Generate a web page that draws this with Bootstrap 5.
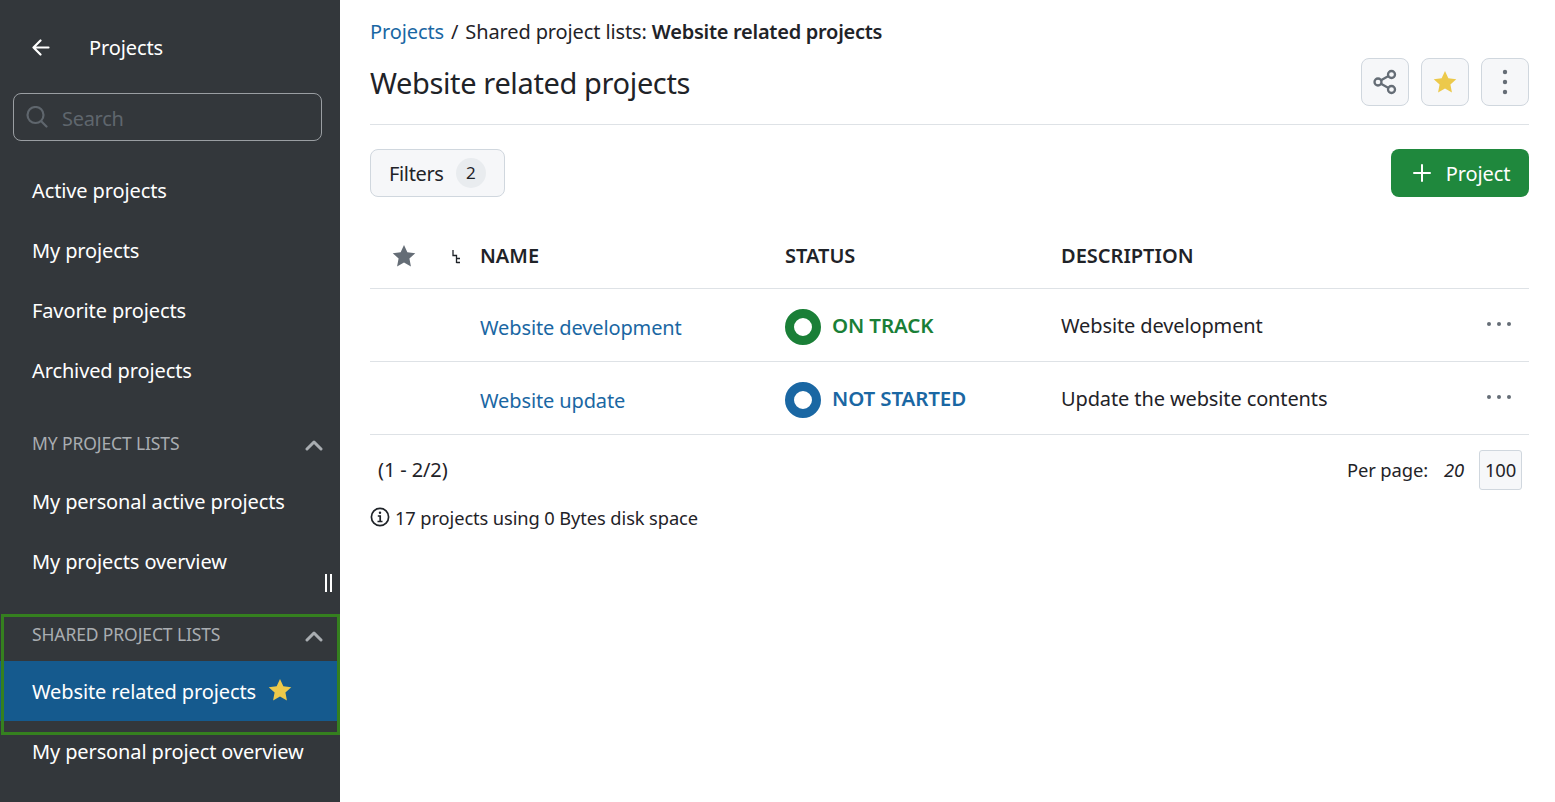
<!doctype html>
<html lang="en">
<head>
<meta charset="utf-8">
<title>Website related projects</title>
<link href="https://cdn.jsdelivr.net/npm/bootstrap@5.3.0/dist/css/bootstrap.min.css" rel="stylesheet">
<style>
html,body{height:100%;overflow:hidden}
body{font-family:"Noto Sans","Open Sans",sans-serif;font-size:20px;color:#1f2328;letter-spacing:-.12px;background:#fff}
a{text-decoration:none;color:#1a67a3}
a:hover{color:#1a67a3}
.shell{height:802px}
.side{width:340px;background:#33373b;color:#fff;flex:none;position:relative}
.side-head{height:93px;padding:30px 0 0 32px;font-size:20px}
.side-head span{margin-left:39px;line-height:36px}
.side-search{margin:0 18px 0 13px;height:48px;border:1px solid #9a9ea2;border-radius:8px;padding:0 12px;color:#5f666d;font-size:20px;letter-spacing:-.3px}
.side-search span{padding-top:3px;margin-left:6px}
.side-list{padding-top:20px}
a.side-item{height:60px;padding-left:32px;color:#fff;display:flex;align-items:center}
.side-sec{padding:0 17px 0 32px;color:#a9adb1;font-size:17.5px;display:flex;align-items:center;justify-content:space-between}
.side-sec svg{margin-top:3px}
.sec1{height:71px;padding-top:14px}
.sec2{height:47px;padding-bottom:7px}
.group-wrap{position:relative;margin:22px 0 1px}
.group-box{position:absolute;left:1px;right:0;top:0;height:121px;border:3px solid #35801f;pointer-events:none}
a.side-item.on{background:#155a8e;padding-top:2px}
.side-item.on svg{margin:0 0 5px 11px}
.handle{position:absolute;left:325px;top:574px;width:7px;height:18px;border-left:2px solid #fff;border-right:2px solid #fff}
.main{flex:1;padding:0 26px 0 30px;min-width:0}
.crumb{height:64px;padding-top:13px;line-height:38px;letter-spacing:-.12px}
.crumb b{font-weight:600;letter-spacing:-.27px}
.crumb-sep{padding:0 7px}
.title-row{height:61px;border-bottom:1px solid #dee2e6;padding-bottom:12px}
.title-row h1{font-size:29px;font-weight:400;margin:-1px 0 0;letter-spacing:-.37px;line-height:40px}
.tool-set{gap:12px;margin-top:-6px}
.tool{width:48px;height:48px;border:1px solid #d0d7de;background:#f6f7f9;border-radius:8px;padding:0;display:flex;align-items:center;justify-content:center}
.filter-row{margin-top:24px;height:48px}
.filter{height:48px;border:1px solid #d0d7de;background:#f6f7f9;border-radius:8px;padding:0 18px;font-size:20px;letter-spacing:-.35px;color:#1f2328;display:flex;align-items:center;gap:12px}
.filter-txt{padding-top:2px}
.count{width:30px;height:30px;border-radius:50%;background:#e9ecef;font-size:17px;display:flex;align-items:center;justify-content:center}
.add{height:48px;width:138px;background:#1f883d;color:#fff;border:0;border-radius:8px;padding:0 0 0 3px;font-size:20px;letter-spacing:-.12px;display:flex;align-items:center;justify-content:center;gap:15px}
.add span{padding-top:2px}
.plist{margin:24px 0 0;border-collapse:collapse;width:100%;table-layout:fixed}
.plist th{height:67px;font-weight:600;border-bottom:1px solid #dee2e6;padding:4px 0 0;font-size:20px;letter-spacing:0}
.plist td{height:73px;border-bottom:1px solid #dee2e6;padding:0;vertical-align:middle}
.head-icons{padding-left:21px}
.sort-ico{margin-left:35px}
.ring{width:36px;height:36px;border-radius:50%;border:9px solid;background:#fff;flex:none}
.ring-ok{border-color:#1a7f37}.ring-no{border-color:#1a67a3}
.stat{display:flex;align-items:center;gap:11px;font-weight:600;font-size:20.5px;padding-top:4px}
.stat-txt{padding-bottom:2px}
.ok{color:#1a7f37}.no{color:#1a67a3}
.more{display:flex;justify-content:flex-end;padding-right:17px;padding-bottom:2px}
.desc{padding-top:2px!important}
.lnk{padding-top:6px!important}
.pager{padding:15px 7px 0 8px}
.per{font-size:18.4px}
.hundred{width:43px;height:40px;border:1px solid #d0d7de;background:#f6f7f9;border-radius:3px;display:flex;align-items:center;justify-content:center;margin-left:15px}
.usage{margin-top:14px;gap:5px;font-size:18.3px;letter-spacing:-.1px}
</style>
</head>
<body>
<div class="shell d-flex">
  <aside class="side">
    <div class="side-head d-flex align-items-start">
      <svg width="18" height="36" viewBox="0 0 18 36" fill="none" stroke="#fff" stroke-width="2.2" stroke-linecap="round" stroke-linejoin="round"><path d="M1.5 17.5H16.5M8.5 10.5 1.5 17.5 8.5 24.5"/></svg>
      <span>Projects</span>
    </div>
    <div class="side-search d-flex align-items-center gap-2">
      <svg width="22" height="22" viewBox="0 0 22 22" fill="none" stroke="#5f666d" stroke-width="2.2" stroke-linecap="round"><circle cx="9.5" cy="9" r="8"/><path d="M15.5 15.5 20.5 20.5"/></svg>
      <span>Search</span>
    </div>
    <nav class="side-list">
      <a class="side-item" href="#">Active projects</a>
      <a class="side-item" href="#">My projects</a>
      <a class="side-item" href="#">Favorite projects</a>
      <a class="side-item" href="#">Archived projects</a>
      <div class="side-sec sec1"><span>MY PROJECT LISTS</span>
        <svg width="18" height="12" viewBox="0 0 18 12" fill="none" stroke="#a9adb1" stroke-width="3" stroke-linecap="round" stroke-linejoin="round"><path d="M2 10 9 3l7 7"/></svg></div>
      <a class="side-item" href="#">My personal active projects</a>
      <a class="side-item" href="#">My projects overview</a>
      <div class="group-wrap">
        <div class="side-sec sec2"><span>SHARED PROJECT LISTS</span>
          <svg width="18" height="12" viewBox="0 0 18 12" fill="none" stroke="#a9adb1" stroke-width="3" stroke-linecap="round" stroke-linejoin="round"><path d="M2 10 9 3l7 7"/></svg></div>
        <a class="side-item on" href="#">Website related projects
          <svg width="26" height="26" viewBox="0 0 24 24" fill="#ecc94b"><path d="M12 1.8l3.1 6.7 7.3.9-5.4 5 1.4 7.2-6.4-3.6-6.4 3.6L7 14.4l-5.4-5 7.3-.9z"/></svg></a>
        <div class="group-box"></div>
      </div>
      <a class="side-item" href="#">My personal project overview</a>
    </nav>
    <div class="handle"></div>
  </aside>
  <main class="main">
    <div class="crumb"><a href="#">Projects</a><span class="crumb-sep">/</span>Shared project lists: <b>Website related projects</b></div>
    <div class="title-row d-flex justify-content-between align-items-start">
      <h1>Website related projects</h1>
      <div class="d-flex tool-set">
        <button class="tool" aria-label="Share"><svg width="26" height="26" viewBox="0 0 26 26" fill="none" stroke="#656d76" stroke-width="2.3"><circle cx="6" cy="13" r="3.5"/><circle cx="19.5" cy="5.5" r="3.5"/><circle cx="19.5" cy="20.5" r="3.5"/><path d="M9 11.3 16.5 7M9 14.7l7.5 4.3"/></svg></button>
        <button class="tool" aria-label="Favorite"><svg width="26" height="26" viewBox="0 0 24 24" fill="#ecc94b"><path d="M12 1.8l3.1 6.7 7.3.9-5.4 5 1.4 7.2-6.4-3.6-6.4 3.6L7 14.4l-5.4-5 7.3-.9z"/></svg></button>
        <button class="tool" aria-label="More"><svg width="6" height="26" viewBox="0 0 6 26" fill="#656d76"><circle cx="3" cy="3" r="2.2"/><circle cx="3" cy="13" r="2.2"/><circle cx="3" cy="23" r="2.2"/></svg></button>
      </div>
    </div>
    <div class="filter-row d-flex justify-content-between">
      <button class="filter"><span class="filter-txt">Filters</span><span class="count">2</span></button>
      <button class="add"><svg width="18" height="18" viewBox="0 0 18 18" stroke="#fff" stroke-width="2" stroke-linecap="round"><path d="M9 1v16M1 9h16"/></svg><span>Project</span></button>
    </div>
    <table class="plist">
      <colgroup><col style="width:110px"><col style="width:305px"><col style="width:276px"><col><col style="width:70px"></colgroup>
      <thead><tr>
        <th><div class="d-flex align-items-center head-icons"><svg width="26" height="26" viewBox="0 0 24 24" fill="#656d76"><path d="M12 1.8l3.1 6.7 7.3.9-5.4 5 1.4 7.2-6.4-3.6-6.4 3.6L7 14.4l-5.4-5 7.3-.9z"/></svg><svg class="sort-ico" width="9" height="15" viewBox="0 0 9 15" fill="none" stroke="#1f2328" stroke-width="1.3"><path d="M1 1v5.5h3.5V14M4.5 9.5H8M4.5 13.5H8"/></svg></div></th>
        <th>NAME</th><th>STATUS</th><th>DESCRIPTION</th><th></th>
      </tr></thead>
      <tbody>
        <tr><td></td><td class="lnk"><a href="#">Website development</a></td>
          <td><div class="stat ok"><span class="ring ring-ok"></span><span class="stat-txt">ON TRACK</span></div></td>
          <td class="desc">Website development</td>
          <td><div class="more"><svg width="26" height="6" viewBox="0 0 26 6" fill="#656d76"><circle cx="3" cy="3" r="2"/><circle cx="13" cy="3" r="2"/><circle cx="23" cy="3" r="2"/></svg></div></td></tr>
        <tr><td></td><td class="lnk"><a href="#">Website update</a></td>
          <td><div class="stat no"><span class="ring ring-no"></span><span class="stat-txt">NOT STARTED</span></div></td>
          <td class="desc">Update the website contents</td>
          <td><div class="more"><svg width="26" height="6" viewBox="0 0 26 6" fill="#656d76"><circle cx="3" cy="3" r="2"/><circle cx="13" cy="3" r="2"/><circle cx="23" cy="3" r="2"/></svg></div></td></tr>
      </tbody>
    </table>
    <div class="pager d-flex justify-content-between align-items-center">
      <span>(1 - 2/2)</span>
      <div class="d-flex align-items-center per"><span>Per page:</span><em class="ms-3">20</em><span class="hundred">100</span></div>
    </div>
    <div class="usage d-flex align-items-center">
      <svg width="20" height="20" viewBox="0 0 20 20" fill="none" stroke="#1f2328" stroke-width="1.7"><circle cx="10" cy="10" r="8.6"/><path d="M7.8 9h2.4v5M7.5 14.5h5"/><circle cx="10" cy="5.8" r="1.2" fill="#1f2328" stroke="none"/></svg>
      <span>17 projects using 0 Bytes disk space</span>
    </div>
  </main>
</div>
</body>
</html>
